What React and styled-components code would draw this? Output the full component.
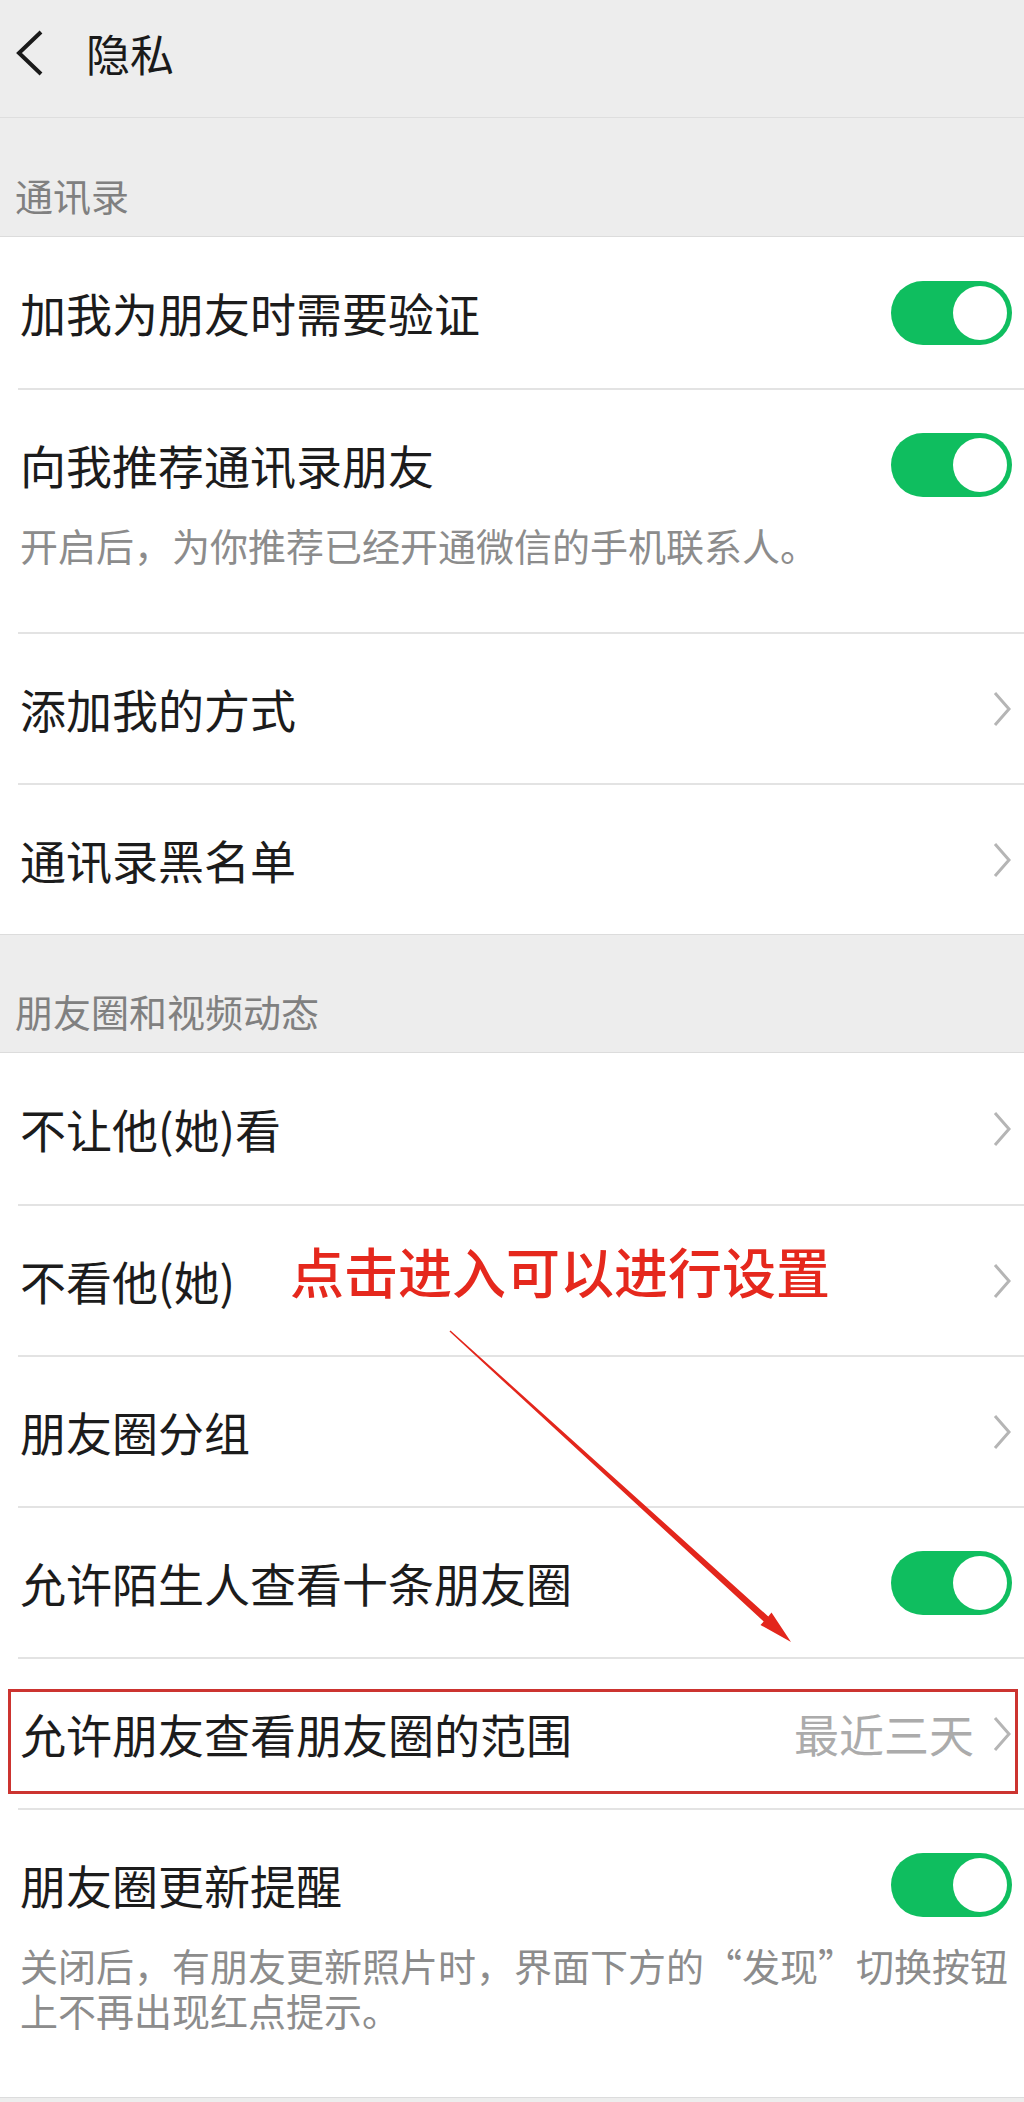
import React from "react";
import styled, { createGlobalStyle } from "styled-components";

const Global = createGlobalStyle`
  html, body { margin: 0; padding: 0; background: #ededed; }
  body { font-family: "Noto Sans CJK SC", "Noto Sans", sans-serif; }
  * { box-sizing: border-box; }
`;

const Page = styled.div`
  position: relative;
  width: 1024px;
  min-height: 2102px;
  background: #ededed;
  overflow: hidden;
`;

const Header = styled.header`
  height: 118px;
  display: flex;
  align-items: center;
  padding: 0 0 12px 15px;
  border-bottom: 1px solid #dedede;
  gap: 41px;
`;

const Title = styled.h1`
  margin: 0;
  font-size: 44px;
  font-weight: 400;
  line-height: 1;
  color: #1a1a1a;
`;

const SectionLabel = styled.div`
  height: ${(p) => p.$h}px;
  display: flex;
  align-items: flex-end;
  padding: 0 0 19px 15px;
  font-size: 38px;
  line-height: 45px;
  color: #808080;
`;

const Group = styled.div`
  background: #fff;
  border-top: 1px solid #dcdcdc;
  border-bottom: 1px solid #dcdcdc;
`;

const Row = styled.div`
  position: relative;
  padding-left: 18px;
`;

const RowInner = styled.div`
  border-top: ${(p) => (p.$first ? "none" : "2px solid #e3e3e3")};
  padding: ${(p) => (p.$tall ? "43px 12px 65px 2px" : "0 12px 0 2px")};
  min-height: ${(p) => (p.$tall ? "auto" : "151px")};
  display: flex;
  flex-direction: column;
  justify-content: center;
`;

const Line = styled.div`
  display: flex;
  align-items: center;
  justify-content: space-between;
  min-height: 64px;
`;

const Label = styled.span`
  font-size: 46px;
  line-height: 1.2;
  color: #1c1c1c;
`;

const Desc = styled.p`
  margin: 25px 0 0;
  font-size: 38px;
  line-height: 45px;
  color: #8c8c8c;
`;

const Right = styled.div`
  display: flex;
  align-items: center;
  gap: 18px;
`;

const Value = styled.span`
  font-size: 45px;
  line-height: 1.2;
  color: #ababab;
`;

const Toggle = styled.div`
  width: 121px;
  height: 64px;
  border-radius: 32px;
  background: #0fbe5f;
  padding: 5px;
  display: flex;
  justify-content: flex-end;
  flex-shrink: 0;
`;

const Knob = styled.div`
  width: 54px;
  height: 54px;
  border-radius: 50%;
  background: #fff;
`;

const Highlight = styled.div`
  position: absolute;
  left: 8px;
  right: 6px;
  top: 32px;
  bottom: 14px;
  border: 3px solid #cc3430;
  pointer-events: none;
`;

const Note = styled.div`
  position: absolute;
  left: 290px;
  top: 1236px;
  font-size: 54px;
  font-weight: 500;
  line-height: 70px;
  color: #e5281d;
  white-space: nowrap;
`;

const ArrowSvg = styled.svg`
  position: absolute;
  left: 440px;
  top: 1320px;
  pointer-events: none;
`;

const BackIcon = () => (
  <svg width="30" height="46" viewBox="0 0 30 46">
    <path d="M26 2 L4 23 L26 44" fill="none" stroke="#1a1a1a" strokeWidth="4" strokeLinejoin="miter" />
  </svg>
);

const Chevron = () => (
  <svg width="20" height="36" viewBox="0 0 20 36">
    <path d="M3 2 L17 18 L3 34" fill="none" stroke="#b5b5b5" strokeWidth="3" />
  </svg>
);

const Switch = () => (
  <Toggle>
    <Knob />
  </Toggle>
);

const Item = ({ label, toggle, chevron, value, desc, first, children }) => (
  <Row>
    <RowInner $first={first} $tall={!!desc}>
      <Line>
        <Label>{label}</Label>
        {toggle && <Switch />}
        {chevron && (
          <Right>
            {value && <Value>{value}</Value>}
            <Chevron />
          </Right>
        )}
      </Line>
      {desc && <Desc>{desc}</Desc>}
    </RowInner>
    {children}
  </Row>
);

export default function App() {
  return (
    <Page>
      <Global />
      <Header>
        <BackIcon />
        <Title>隐私</Title>
      </Header>
      <SectionLabel $h={118}>通讯录</SectionLabel>
      <Group>
        <Item first label="加我为朋友时需要验证" toggle />
        <Item label="向我推荐通讯录朋友" toggle desc="开启后，为你推荐已经开通微信的手机联系人。" />
        <Item label="添加我的方式" chevron />
        <Item label="通讯录黑名单" chevron />
      </Group>
      <SectionLabel $h={117}>朋友圈和视频动态</SectionLabel>
      <Group>
        <Item first label="不让他(她)看" chevron />
        <Item label="不看他(她)" chevron />
        <Item label="朋友圈分组" chevron />
        <Item label="允许陌生人查看十条朋友圈" toggle />
        <Item label="允许朋友查看朋友圈的范围" chevron value="最近三天">
          <Highlight />
        </Item>
        <Item
          label="朋友圈更新提醒"
          toggle
          desc="关闭后，有朋友更新照片时，界面下方的“发现”切换按钮上不再出现红点提示。"
        />
      </Group>
      <Note>点击进入可以进行设置</Note>
      <ArrowSvg width="370" height="340" viewBox="0 0 370 340">
        <polygon
          points="10.5,10.4 328.3,296.5 331.5,292.5 351,322 320.5,305 323.7,301.5 9.5,11.6"
          fill="#e3261c"
        />
      </ArrowSvg>
    </Page>
  );
}
